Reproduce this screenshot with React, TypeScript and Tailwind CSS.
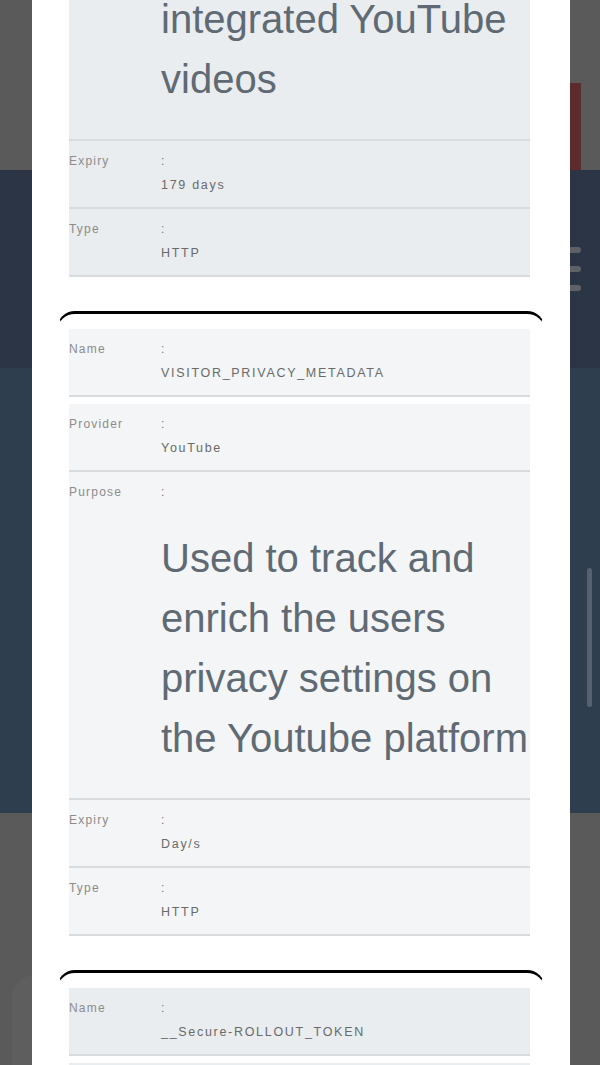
import React from "react";

type RowProps = {
  label: string;
  value: string;
  bg: string;
  big?: boolean;
  extra?: string;
};

function Row({ label, value, bg, big, extra }: RowProps) {
  return (
    <div className={`flex border-b-2 border-[#d9dcde] pt-[8px] pb-[10px] ${bg} ${extra ?? ""}`}>
      <div className="w-[92px] shrink-0 text-[12px] leading-[24px] tracking-[1.2px] text-[#8c8c8c]">
        {label}
      </div>
      <div className="min-w-0 flex-1">
        <div className="text-[12px] leading-[24px] text-[#7a7a7a]">:</div>
        {big ? (
          <p className="mt-[24px] mb-[20px] text-[40px] leading-[60px] text-[#5f6a74]">{value}</p>
        ) : (
          <div className="text-[12.5px] leading-[24px] tracking-[1.7px] text-[#6a6a6a]">{value}</div>
        )}
      </div>
    </div>
  );
}

export default function App() {
  return (
    <div className="relative h-[1065px] w-[600px] overflow-hidden font-['Liberation_Sans',Arial,sans-serif]">
      {/* dimmed page behind the modal */}
      <div className="flex h-full flex-col">
        <div className="flex h-[170px] shrink-0 justify-end bg-[#5a5a5a] pr-[19px] pt-[83px]">
          <div className="h-[87px] w-[120px] bg-[#5b2b2d]" />
        </div>
        <div className="flex h-[198px] shrink-0 flex-col items-end gap-[13px] bg-[#2c3545] pr-[19px] pt-[77px]">
          <div className="h-[6px] w-[30px] rounded-full bg-[#5e6166]" />
          <div className="h-[6px] w-[30px] rounded-full bg-[#5e6166]" />
          <div className="h-[6px] w-[30px] rounded-full bg-[#5e6166]" />
        </div>
        <div className="flex h-[445px] shrink-0 justify-end bg-[#2f3e4f] pr-[8px] pt-[200px]">
          <div className="h-[139px] w-[5px] rounded-sm bg-[#56616e]" />
        </div>
        <div className="flex min-h-0 flex-1 overflow-hidden bg-[#5a5a5a] pl-[12px] pt-[162px]">
          <div className="h-[120px] w-[60px] shrink-0 rounded-[22px] bg-[#5e5e5e]" />
        </div>
      </div>

      {/* modal */}
      <div className="absolute top-0 bottom-0 left-[32px] w-[538px] overflow-hidden bg-white">
        <div className="flex flex-col gap-[34px] px-[25px]">
          {/* first cookie (scrolled, partly above) */}
          <div className="-mt-[11px] border-x border-transparent pl-[11px] pr-[14px]">
            <div className="flex border-b-2 border-[#d9dcde] bg-[#e9edef] pb-[10px]">
              <div className="w-[92px] shrink-0" />
              <div className="min-w-0 flex-1">
                <p className="mb-[20px] text-[40px] leading-[60px] text-[#5f6a74]">integrated YouTube videos</p>
              </div>
            </div>
            <Row label="Expiry" value="179 days" bg="bg-[#e9edef]" />
            <Row label="Type" value="HTTP" bg="bg-[#e9edef]" />
          </div>

          {/* second cookie */}
          <div className="rounded-t-[18px] border-x border-t-[3px] border-x-transparent border-t-black pl-[11px] pr-[14px] pt-[15px]">
            <Row label="Name" value="VISITOR_PRIVACY_METADATA" bg="bg-[#f3f5f6]" extra="mb-[7px]" />
            <Row label="Provider" value="YouTube" bg="bg-[#f3f5f6]" />
            <Row
              label="Purpose"
              value="Used to track and enrich the users privacy settings on the Youtube platform"
              bg="bg-[#f3f5f6]"
              big
            />
            <Row label="Expiry" value="Day/s" bg="bg-[#f3f5f6]" />
            <Row label="Type" value="HTTP" bg="bg-[#f3f5f6]" />
          </div>

          {/* third cookie */}
          <div className="rounded-t-[18px] border-x border-t-[3px] border-x-transparent border-t-black pl-[11px] pr-[14px] pt-[15px]">
            <Row label="Name" value="__Secure-ROLLOUT_TOKEN" bg="bg-[#e9edef]" extra="mb-[7px]" />
            <Row label="Provider" value="YouTube" bg="bg-[#e9edef]" />
          </div>
        </div>
      </div>
    </div>
  );
}
